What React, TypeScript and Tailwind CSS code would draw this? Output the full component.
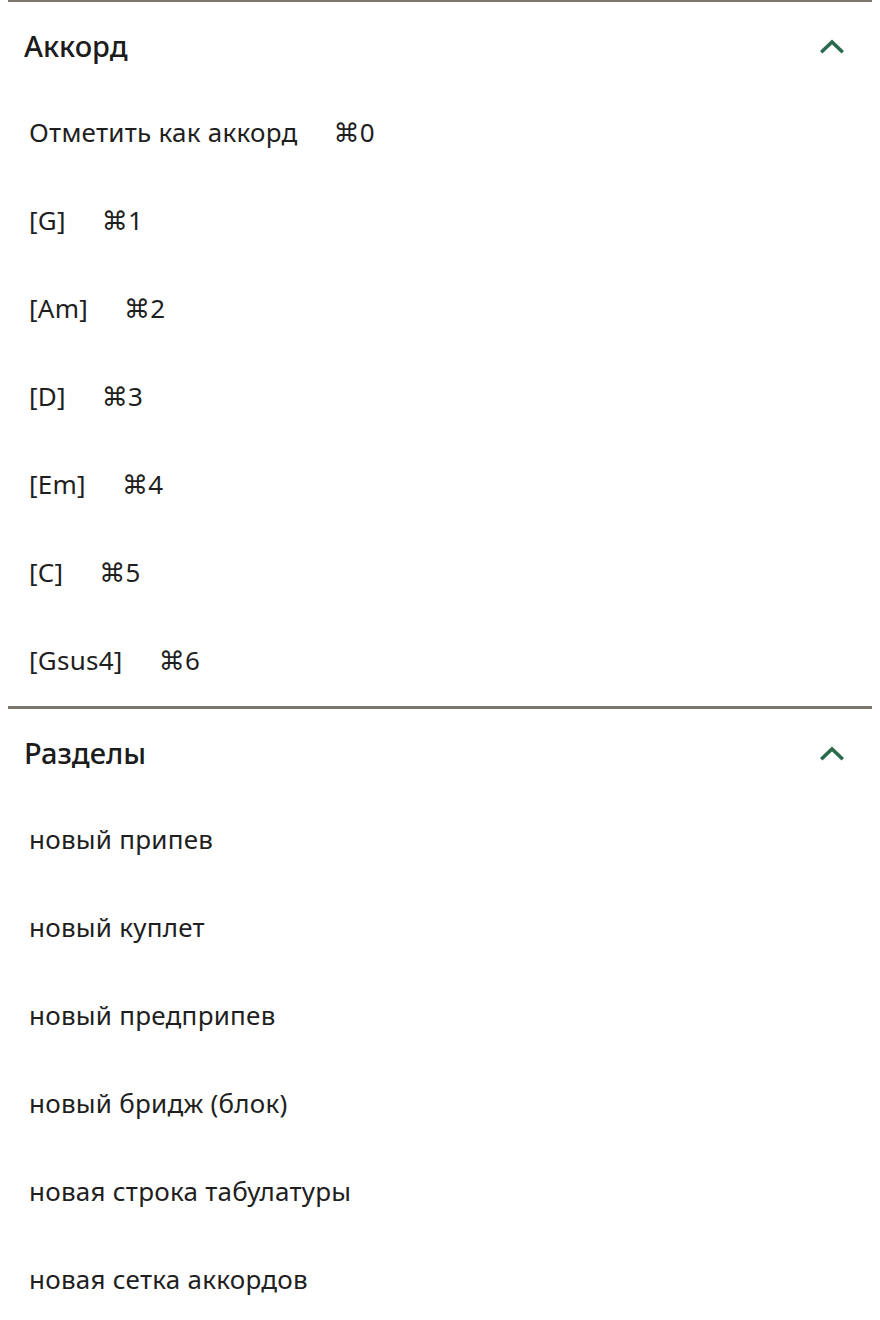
import React from 'react';

const chords = [
  { label: 'Отметить как аккорд', key: '0' },
  { label: '[G]', key: '1' },
  { label: '[Am]', key: '2' },
  { label: '[D]', key: '3' },
  { label: '[Em]', key: '4' },
  { label: '[C]', key: '5' },
  { label: '[Gsus4]', key: '6' },
];

const sections = [
  'новый припев',
  'новый куплет',
  'новый предприпев',
  'новый бридж (блок)',
  'новая строка табулатуры',
  'новая сетка аккордов',
];

function Chevron() {
  return (
    <svg width="24" height="16" viewBox="0 0 24 16" fill="none">
      <polyline
        points="2.5,13 12,4 21.5,13"
        stroke="#2b6a4e"
        strokeWidth="3.6"
        strokeLinecap="square"
        strokeLinejoin="miter"
      />
    </svg>
  );
}

function Panel({ title, children }: { title: string; children: React.ReactNode }) {
  return (
    <section className="border-t-[3px] border-[#7b776d]">
      <div className="h-[88px] flex items-center justify-between pl-4 pr-7">
        <h2 className="text-[29px] font-medium text-[#1c1c1c]">{title}</h2>
        <Chevron />
      </div>
      <ul>{children}</ul>
    </section>
  );
}

export default function App() {
  return (
    <div
      className="bg-white w-[880px] px-2 -mt-px text-[#1f1f1f]"
      style={{ fontFamily: '"Noto Sans", "DejaVu Sans", sans-serif' }}
    >
      <Panel title="Аккорд">
        {chords.map((c) => (
          <li
            key={c.key}
            className="h-[88px] flex items-center gap-[36px] pl-[21px] pb-[3px] text-[26px] tracking-[0.25px]"
          >
            <span>{c.label}</span>
            <span>⌘{c.key}</span>
          </li>
        ))}
      </Panel>
      <Panel title="Разделы">
        {sections.map((s) => (
          <li key={s} className="h-[88px] flex items-center pl-[21px] pb-[3px] text-[26px] tracking-[0.25px]">
            {s}
          </li>
        ))}
      </Panel>
    </div>
  );
}
